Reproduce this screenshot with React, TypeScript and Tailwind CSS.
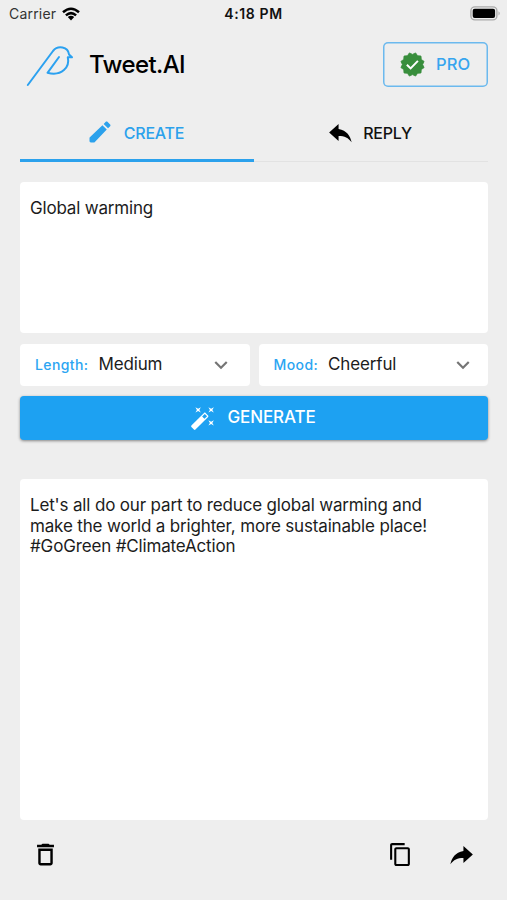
import type { ReactNode } from 'react';

interface IconProps {
  className?: string;
}

function Icon({ path, className }: IconProps & { path: string }) {
  return (
    <svg viewBox="0 0 24 24" fill="currentColor" className={className}>
      <path d={path} />
    </svg>
  );
}

const ICONS = {
  pencil:
    'M3 17.3v2.5c0 .7.5 1.2 1.2 1.2h2.5c.3 0 .5-.1.7-.3L17.81 9.94l-3.75-3.75L3.3 16.6c-.2.2-.3.4-.3.7zM20.71 7.04c.39-.39.39-1.02 0-1.41l-2.34-2.34c-.39-.39-1.02-.39-1.41 0l-1.83 1.83 3.75 3.75 1.83-1.83z',
  reply: 'M10.4 9V5l-7.8 7 7.8 7v-4.1c5 0 8.1 1.6 10.8 5.1-1-5-4-10-10.8-11z',
  share: 'M13.6 9V5l7.8 7-7.8 7v-4.1c-5 0-8.1 1.6-10.8 5.1 1-5 4-10 10.8-11z',
  chevron: 'M7.41 8.59 12 13.17l4.59-4.58L18 10l-6 6-6-6z',
  wand:
    'M7.5 5.6L5 7l1.4-2.5L5 2l2.5 1.4L10 2 8.6 4.5 10 7 7.5 5.6zm12 9.8L22 14l-1.4 2.5L22 19l-2.5-1.4L17 19l1.4-2.5L17 14l2.5 1.4zM22 2l-1.4 2.5L22 7l-2.5-1.4L17 7l1.4-2.5L17 2l2.5 1.4L22 2zm-8.66 10.78l2.44-2.44-2.12-2.12-2.44 2.44 2.12 2.12zm1.03-5.49l2.34 2.34c.39.37.39 1.02 0 1.41L5.04 22.71c-.39.39-1.04.39-1.41 0l-2.34-2.34c-.39-.37-.39-1.02 0-1.41L12.96 7.29c.39-.39 1.04-.39 1.41 0z',
  trash: 'M6 19c0 1.1.9 2 2 2h8c1.1 0 2-.9 2-2V7H6v12zM8 9h8v10H8V9zm7.5-5l-1-1h-5l-1 1H5v2h14V4z',
  copy: 'M16 1H4c-1.1 0-2 .9-2 2v14h2V3h12V1zm3 4H8c-1.1 0-2 .9-2 2v14c0 1.1.9 2 2 2h11c1.1 0 2-.9 2-2V7c0-1.1-.9-2-2-2zm0 16H8V7h11v14z',
};

// Twelve-toothed badge outline
const BADGE_POINTS = Array.from({ length: 24 }, (_, i) => {
  const r = i % 2 === 0 ? 11.5 : 9.7;
  const a = (i * Math.PI) / 12 + Math.PI / 12;
  return `${(12 + r * Math.sin(a)).toFixed(2)},${(12 - r * Math.cos(a)).toFixed(2)}`;
}).join(' ');

function Badge({ className }: IconProps) {
  return (
    <svg viewBox="0 0 24 24" className={className}>
      <polygon points={BADGE_POINTS} fill="#388e3c" stroke="#388e3c" strokeWidth="0.8" strokeLinejoin="round" />
      <path d="M6.6 12.2l3.6 3.6 7-7.3" fill="none" stroke="#fff" strokeWidth="1.9" />
    </svg>
  );
}

function Bird({ className }: IconProps) {
  return (
    <svg viewBox="0 0 48 42" fill="none" stroke="#2ba1f0" strokeWidth="2" strokeLinecap="round" strokeLinejoin="round" className={className}>
      <path d="M1.8 40L27 6C32 0 42 1.8 43 9.4L46 12.2H41.8C44 22 36 31.5 21.5 27.8L33 12" />
    </svg>
  );
}

function StatusBar() {
  return (
    <div className="flex h-7 items-center justify-between pb-px pl-[9px] pr-[6px] text-[14px]">
      <div className="flex flex-1 items-center gap-[6px]">
        <span className="tracking-[0.2px] text-[#333]">Carrier</span>
        <svg viewBox="0 0 18 14" className="h-[14px] w-[18px]" fill="none" stroke="#000" strokeWidth="2.5">
          <path d="M1 5.2Q9-1.8 17 5.2M3.9 8.4Q9 3.9 14.1 8.4" />
          <path d="M5.8 10.1Q9 7.4 12.2 10.1L9 13.5z" fill="#000" stroke="none" />
        </svg>
      </div>
      <span className="mr-[3px] font-semibold tracking-[0.6px] text-[#111]">4:18 PM</span>
      <div className="flex flex-1 items-center justify-end">
        <svg viewBox="0 0 31 15" className="h-[15px] w-[31px]">
          <rect x="0.9" y="0.9" width="26" height="13" rx="4" fill="none" stroke="#aaa" strokeWidth="1.4" />
          <rect x="2.7" y="2.7" width="22.4" height="9.4" rx="2" fill="#000" />
          <path d="M28.5 5.3Q31 7.4 28.5 9.5z" fill="#aaa" />
        </svg>
      </div>
    </div>
  );
}

function Select({ label, value, end }: { label: string; value: string; end: string }) {
  return (
    <div className={`flex h-[42px] items-center rounded bg-white pl-[15px] ${end}`}>
      <span className="pb-px text-[14px] font-medium tracking-[0.4px] text-[#2ba5f2]">{label}</span>
      <span className="ml-[10px] flex-1 text-[17px] tracking-[-0.15px] text-[#1c1c1c]">{value}</span>
      <Icon path={ICONS.chevron} className="h-[26px] w-[26px] text-[#757575]" />
    </div>
  );
}

function Tab({ active, children }: { active?: boolean; children: ReactNode }) {
  return (
    <div
      className={`flex flex-1 items-center justify-center pr-[4px] text-[16px] font-medium tracking-[-0.2px] ${
        active ? 'border-b-[3px] border-[#2ba1ec] text-[#2ba1ec]' : 'border-b border-[#e2e2e2] pb-px text-[#111]'
      }`}
    >
      {children}
    </div>
  );
}

export default function App() {
  return (
    <div className="flex h-[900px] w-[507px] flex-col bg-[#eee] font-['Inter',sans-serif]">
      <StatusBar />
      <div className="flex flex-1 flex-col px-5 pr-[19px]">
        <header className="mt-[14px] flex h-[45px] items-center">
          <Bird className="ml-[6px] mt-[3px] h-[42px] w-[48px]" />
          <h1 className="ml-[15px] pt-px text-[24px] font-medium tracking-[-0.6px] text-black">Tweet.AI</h1>
          <button className="ml-auto flex h-[45px] w-[105px] items-center rounded-[5px] pl-[17px] text-[16.5px] font-medium text-[#37a5ee] shadow-[inset_0_0_0_1.5px_#6bb9ee]">
            <Badge className="h-[25px] w-[25px]" />
            <span className="ml-[11px] tracking-[0.1px]">PRO</span>
          </button>
        </header>

        <nav className="mt-[18px] flex h-[57px]">
          <Tab active>
            <Icon path={ICONS.pencil} className="mr-[10px] h-[28px] w-[28px]" />
            <span className="pt-[2px]">CREATE</span>
          </Tab>
          <Tab>
            <Icon path={ICONS.reply} className="mr-[8px] h-[29px] w-[29px] text-black" />
            <span>REPLY</span>
          </Tab>
        </nav>

        <div className="mt-5 h-[151px] rounded bg-white px-[10px] pt-4 text-[17px] leading-[21px] tracking-[-0.18px] text-[#1c1c1c]">
          Global warming
        </div>

        <div className="mt-[10.5px] grid grid-cols-2 gap-[9px]">
          <Select label="Length:" value="Medium" end="pr-[16px]" />
          <Select label="Mood:" value="Cheerful" end="pr-[12px]" />
        </div>

        <button className="mt-[10px] flex h-[44px] items-center justify-center rounded bg-[#1da1f2] pr-[2px] text-[17px] text-white shadow-[0_1px_3px_rgba(0,0,0,0.45)]">
          <Icon path={ICONS.wand} className="mr-[11px] h-[26px] w-[26px]" />
          <span className="pt-px font-medium tracking-[-0.1px]">GENERATE</span>
        </button>

        <div className="mt-[39.5px] h-[340.5px] rounded bg-white px-[10px] pt-4 text-[17px] leading-[20.5px] tracking-[-0.16px] text-[#1c1c1c]">
          Let's all do our part to reduce global warming and
          <br />
          make the world a brighter, more sustainable place!
          <br />
          #GoGreen #ClimateAction
        </div>

        <footer className="mt-[20px] flex items-center text-black">
          <Icon path={ICONS.trash} className="ml-[11px] h-[29px] w-[29px]" />
          <Icon path={ICONS.copy} className="ml-auto h-[25px] w-[25px]" />
          <Icon path={ICONS.share} className="ml-[34px] mr-[12px] h-[29px] w-[29px]" />
        </footer>
      </div>
    </div>
  );
}
